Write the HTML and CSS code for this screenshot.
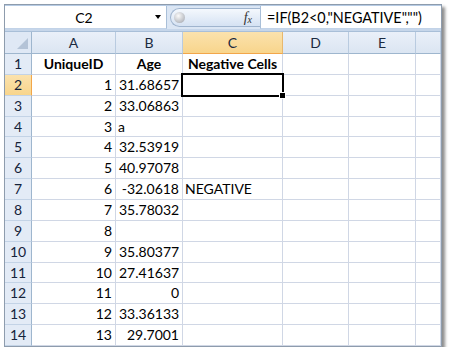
FILE: index.html
```html
<!doctype html>
<html lang="en">
<head>
	<meta charset="UTF-8">
	<title>Negative Cells</title>
	<link rel="stylesheet" href="styles.css">
</head>
<body>
	<div class="sheet">
		<div class="fbar">
			<div class="namebox">
				<span class="ref">C2</span>
				<span class="drop"></span>
			</div>
			<div class="pill">
				<span class="knob"></span>
				<span class="fx"><i>f</i><sub>x</sub></span>
			</div>
			<div class="formula">=IF(B2&lt;0,"NEGATIVE","")</div>
		</div>
		<div class="strip"></div>

		<div class="grid">
			<div class="corner"><span class="tri"></span></div>
			<div class="ch">A</div>
			<div class="ch">B</div>
			<div class="ch sel">C</div>
			<div class="ch">D</div>
			<div class="ch">E</div>
			<div class="ch"></div>

			<div class="rh">1</div><div class="c b ctr">UniqueID</div><div class="c b ctr">Age</div><div class="c b ctr">Negative Cells</div><div class="c"></div><div class="c"></div><div class="c"></div>
			<div class="rh sel">2</div><div class="c">1</div><div class="c">31.68657</div><div class="c active"><span class="handle"></span></div><div class="c"></div><div class="c"></div><div class="c"></div>
			<div class="rh">3</div><div class="c">2</div><div class="c">33.06863</div><div class="c"></div><div class="c"></div><div class="c"></div><div class="c"></div>
			<div class="rh">4</div><div class="c">3</div><div class="c l">a</div><div class="c"></div><div class="c"></div><div class="c"></div><div class="c"></div>
			<div class="rh">5</div><div class="c">4</div><div class="c">32.53919</div><div class="c"></div><div class="c"></div><div class="c"></div><div class="c"></div>
			<div class="rh">6</div><div class="c">5</div><div class="c">40.97078</div><div class="c"></div><div class="c"></div><div class="c"></div><div class="c"></div>
			<div class="rh">7</div><div class="c">6</div><div class="c">-32.0618</div><div class="c l">NEGATIVE</div><div class="c"></div><div class="c"></div><div class="c"></div>
			<div class="rh">8</div><div class="c">7</div><div class="c">35.78032</div><div class="c"></div><div class="c"></div><div class="c"></div><div class="c"></div>
			<div class="rh">9</div><div class="c">8</div><div class="c"></div><div class="c"></div><div class="c"></div><div class="c"></div><div class="c"></div>
			<div class="rh">10</div><div class="c">9</div><div class="c">35.80377</div><div class="c"></div><div class="c"></div><div class="c"></div><div class="c"></div>
			<div class="rh">11</div><div class="c">10</div><div class="c">27.41637</div><div class="c"></div><div class="c"></div><div class="c"></div><div class="c"></div>
			<div class="rh">12</div><div class="c">11</div><div class="c">0</div><div class="c"></div><div class="c"></div><div class="c"></div><div class="c"></div>
			<div class="rh">13</div><div class="c">12</div><div class="c">33.36133</div><div class="c"></div><div class="c"></div><div class="c"></div><div class="c"></div>
			<div class="rh">14</div><div class="c">13</div><div class="c">29.7001</div><div class="c"></div><div class="c"></div><div class="c"></div><div class="c"></div>
		</div>
	</div>
</body>
</html>
```

FILE: styles.css
```css
html, body {
	margin: 0;
	padding: 0;
	background: #fff;
	font-family: Lato, "Open Sans", sans-serif;
	font-size: 14px;
	color: #000;
}

.sheet {
	margin: 4px 0 0 4px;
	width: 438px;
	border: 1px solid #8e9cad;
	box-shadow: 3px 3px 3px rgba(0, 0, 0, 0.45);
	background: #fff;
	box-sizing: border-box;
	overflow: hidden;
}

/* formula bar */
.fbar {
	display: flex;
	height: 24px;
	background: #dbe6f4;
	border-top: 1px solid #b6cbe4;
	box-sizing: border-box;
}
.namebox {
	width: 162px;
	background: #fff;
	border-right: 1px solid #a9bfd8;
	border-bottom: 1px solid #c2d3e8;
	display: flex;
	align-items: center;
	box-sizing: border-box;
}
.namebox .ref {
	flex: 1;
	text-align: center;
	padding-left: 8px;
}
.namebox .drop {
	width: 0;
	height: 0;
	border-left: 3px solid transparent;
	border-right: 3px solid transparent;
	border-top: 4px solid #000;
	margin-right: 5px;
}
.pill {
	width: 90px;
	margin: 2px 0 2px 3px;
	border: 1px solid #9fb4ce;
	border-right: none;
	border-radius: 10px 0 0 10px;
	background: linear-gradient(#f4f8fd, #d5e2f3);
	display: flex;
	align-items: center;
	justify-content: space-between;
	box-sizing: border-box;
}
.knob {
	width: 11px;
	height: 11px;
	margin-left: 3px;
	border-radius: 50%;
	background: radial-gradient(circle at 40% 35%, #fafafa, #b9bcc2 70%, #9599a0);
}
.fx {
	font-family: "Liberation Serif", serif;
	font-size: 14px;
	color: #333;
	margin-right: 8px;
}
.fx sub {
	font-size: 10px;
	font-style: italic;
	vertical-align: -1px;
}
.formula {
	flex: 1;
	background: #fff;
	border-left: 1px solid #a9bfd8;
	border-bottom: 1px solid #c2d3e8;
	padding-left: 6px;
	display: flex;
	align-items: center;
	white-space: nowrap;
	font-size: 14.4px;
}
.strip {
	height: 2px;
	background: #c6d6ea;
	border-bottom: 1px solid #a9bfd8;
}

/* sheet grid */
.grid {
	display: grid;
	grid-template-columns: 27px 84px 67px 100px 66px 67px 1fr;
	grid-template-rows: 22px 21px 21px 21px 20px 21px 21px 21px 21px 21px 21px 20px 21px 21px 21px;
}
.grid > div {
	box-sizing: border-box;
	border-right: 1px solid #d0d7e5;
	border-bottom: 1px solid #d0d7e5;
}
.corner {
	position: relative;
	background: #dfe8f5;
	border-right-color: #9eb6ce !important;
	border-bottom-color: #9eb6ce !important;
}
.tri {
	position: absolute;
	right: 3px;
	bottom: 4px;
	width: 0;
	height: 0;
	border-left: 11px solid transparent;
	border-bottom: 11px solid #b4c3d7;
}
.ch {
	background: linear-gradient(#eaf0f9, #dbe5f2);
	border-right-color: #b9cbe0 !important;
	border-bottom-color: #9eb6ce !important;
	text-align: center;
	line-height: 21px;
	color: #1b2a40;
}
.ch.sel {
	background: linear-gradient(#fbe2ad, #f8d58c);
	border-bottom-color: #f2a64a !important;
	border-right-color: #e8b86e !important;
}
.rh {
	background: #e3ebf6;
	border-right-color: #9eb6ce !important;
	border-bottom-color: #c3d3e6 !important;
	text-align: center;
	line-height: 20px;
	color: #15233a;
}
.rh.sel {
	background: linear-gradient(#fbe2ad, #f8d58c);
	border-right-color: #f2a64a !important;
}
.c {
	text-align: right;
	padding: 0 3px;
	line-height: 20px;
	white-space: nowrap;
}
.c.l {
	text-align: left;
	padding-left: 2px;
}
.c.ctr {
	text-align: center;
	padding: 0;
}
.c.b {
	font-weight: bold;
}
.c.active {
	position: relative;
}
.c.active::before {
	content: "";
	position: absolute;
	left: -2px;
	top: -2px;
	right: -2px;
	bottom: -2px;
	border: 2px solid #000;
}
.handle {
	position: absolute;
	right: -4px;
	bottom: -4px;
	width: 7px;
	height: 7px;
	background: #000;
	border: 1px solid #fff;
	box-sizing: border-box;
	z-index: 1;
}
```
